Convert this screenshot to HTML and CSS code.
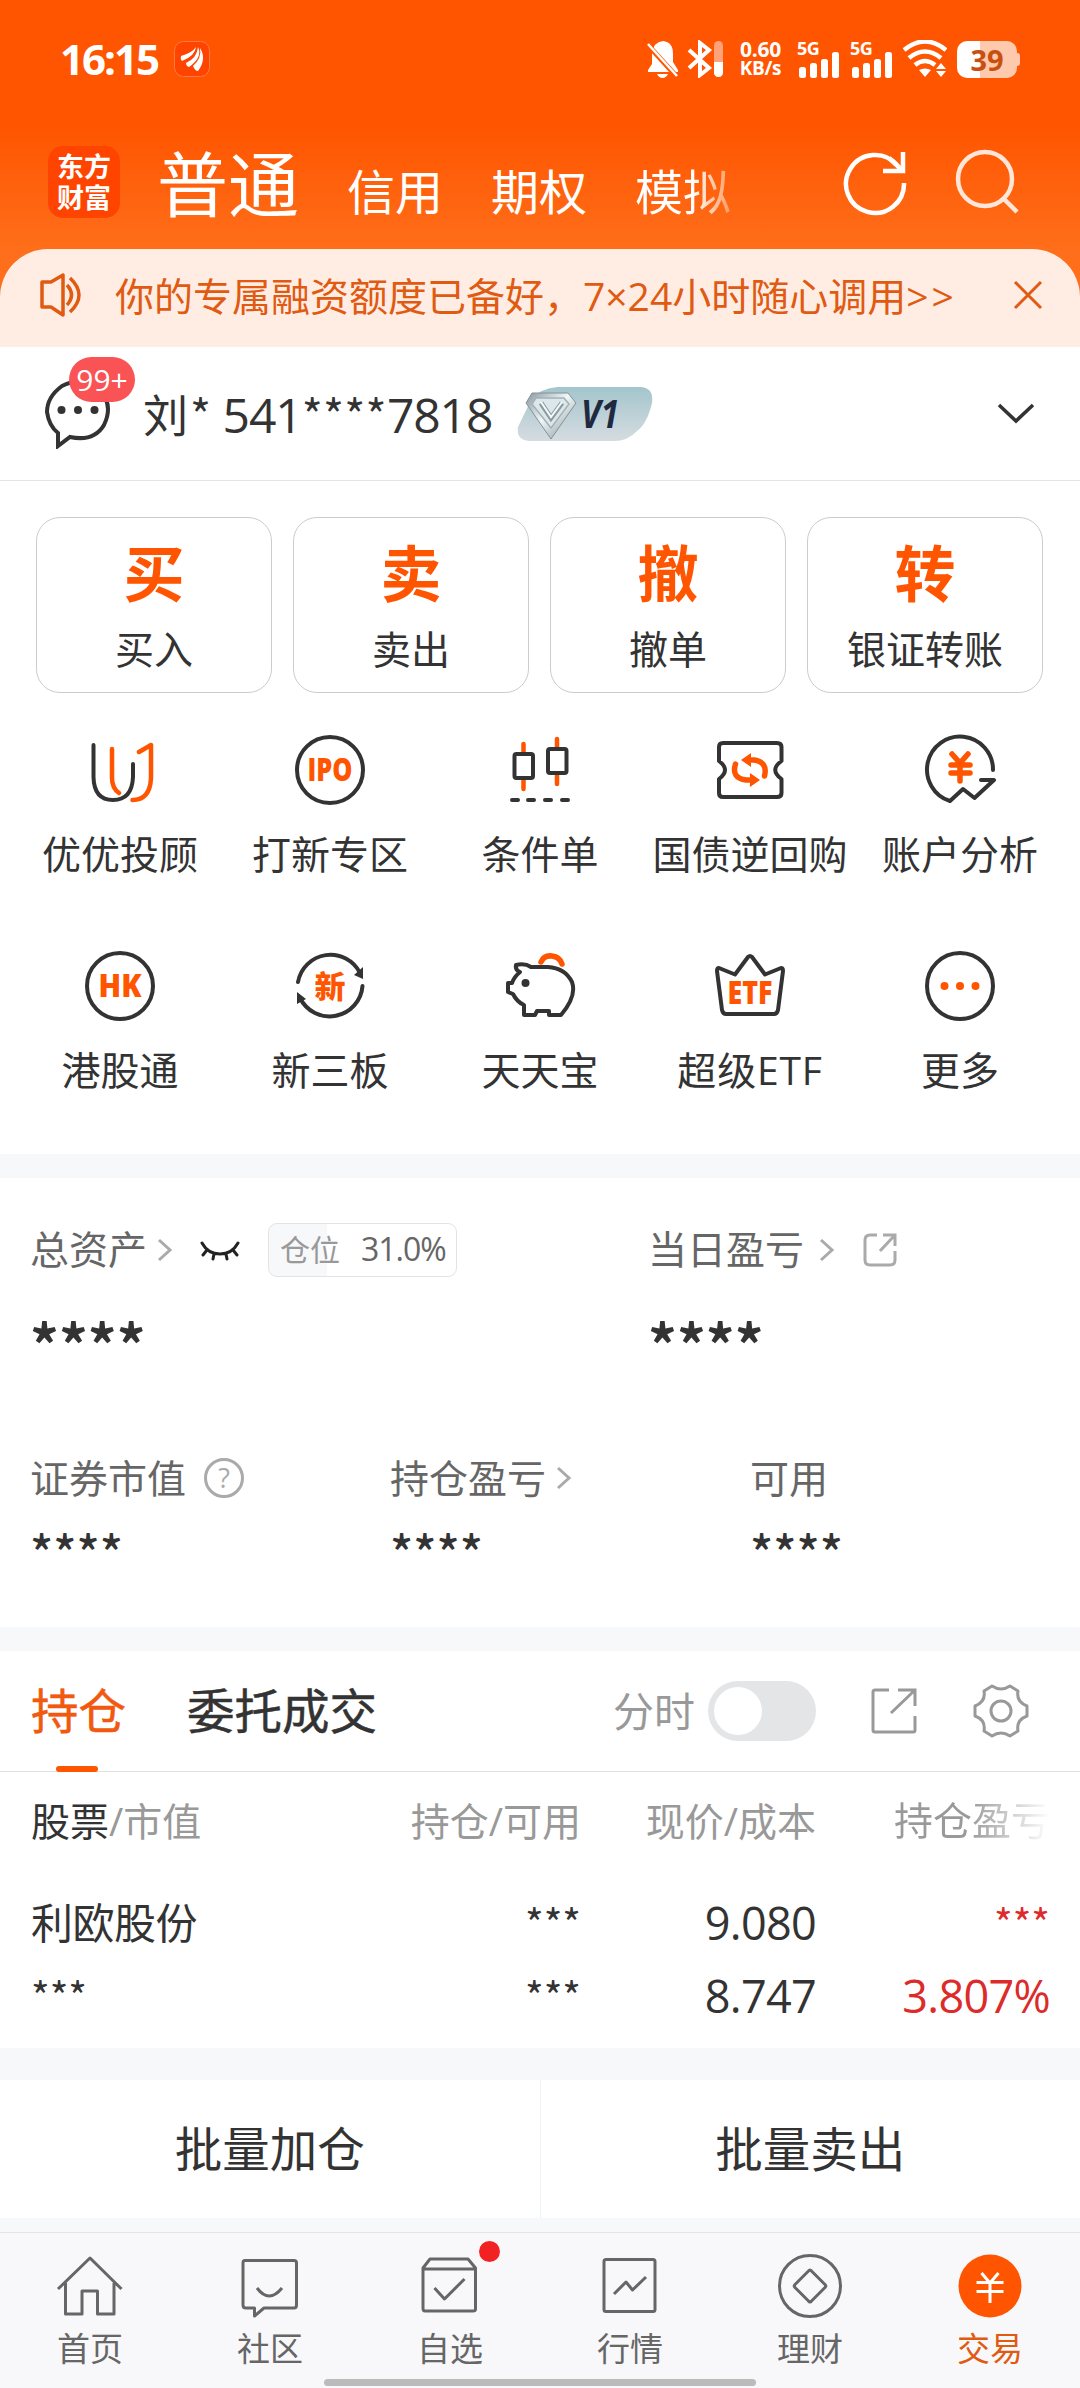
FILE: index.html
```html
<!DOCTYPE html>
<html lang="zh-CN">
<head>
<meta charset="utf-8">
<title>交易</title>
<link rel="stylesheet" href="styles.css">
</head>
<body>
<header class="top">
  <div class="status">
    <span class="clock">16:15</span>
    <svg class="mini-logo" width="36" height="36" viewBox="0 0 36 36"><rect x=".5" y=".5" width="35" height="35" rx="9" fill="#ff4400" stroke="#ff7a45"/><path fill="#fff" d="M7 15Q18 12 22 6Q21 15 8 20Q6 18 7 15ZM12 22Q23 17 24 6Q29 16 15 26Q12 25 12 22ZM19 25Q28 17 26 7Q33 18 24 30Q21 30 19 25Z"/></svg>
    <div class="status-right">
      <svg width="32" height="38" viewBox="0 0 32 38"><path fill="#fff" d="M16 1Q26 2 26 14V22L31 30V32H1V30L5 24V14Q6 2 16 1ZM10 34H21Q19 38 15.500 38Q12 38 10 34Z"/><path d="M0 4L30 37" stroke="#ff5500" stroke-width="5"/><path d="M1 4L30 36" stroke="#fff" stroke-width="2.500"/></svg>
      <svg class="bt" width="36" height="38" viewBox="0 0 36 38"><path d="M2 10L22 28L13 35V3L22 10L2 28" fill="none" stroke="#fff" stroke-width="4"/><rect x="27" y="1" width="9" height="36" rx="4.500" fill="#ffa27a"/><path fill="#fff" d="M27 22H36V32.500A4.500 4.500 0 0 1 27 32.500Z"/></svg>
      <div class="speed"><span>0.60</span><span>KB/s</span></div>
      <div class="signal"><span>5G</span><svg width="40" height="26" viewBox="0 0 40 26" fill="#fff"><rect y="15" width="7" height="11" rx="2.500"/><rect x="11" y="11" width="7" height="15" rx="2.500"/><rect x="22" y="7" width="7" height="19" rx="2.500"/><rect x="33" y="0" width="7" height="26" rx="2.500"/></svg></div>
      <div class="signal"><span>5G</span><svg width="40" height="26" viewBox="0 0 40 26" fill="#fff"><rect y="15" width="7" height="11" rx="2.500"/><rect x="11" y="11" width="7" height="15" rx="2.500"/><rect x="22" y="7" width="7" height="19" rx="2.500"/><rect x="33" y="0" width="7" height="26" rx="2.500"/></svg></div>
      <svg class="wifi" width="44" height="38" viewBox="0 0 44 38"><path d="M1 10Q22 -7 43 10M6 18Q22 5 38 18M12 25Q22 17 32 25" fill="none" stroke="#fff" stroke-width="4.500"/><path fill="#fff" d="M16 30Q22 27 28 30L22 37ZM33 29L38 23L43 29ZM33 31H43L38 37Z"/></svg>
      <div class="battery">39</div>
    </div>
  </div>
  <nav class="accounts">
    <div class="brand"><span>东方</span><span>财富</span></div>
    <div class="account-tabs"><b>普通</b><span>信用</span><span>期权</span><span class="fading">模拟</span></div>
    <svg class="refresh" width="66" height="68" viewBox="0 0 66 68" fill="none" stroke="#fff" stroke-width="4.500"><path d="M61 35A29 29 0 1 1 54 17"/><path d="M60 4V23H40M46 10L59 22" /></svg>
    <svg width="64" height="68" viewBox="0 0 64 68" fill="none" stroke="#ffe6d8" stroke-width="4.500"><circle cx="30" cy="31" r="27"/><path d="M49 51L62 64"/></svg>
  </nav>
</header>

<section class="notice">
  <svg width="42" height="44" viewBox="0 0 42 44" fill="none" stroke="#e05a12" stroke-width="3.500"><path d="M2 9H11L23 2V42L11 34H2Z" stroke-linejoin="round"/><path d="M27 12Q36 22 27 32M30 5Q48 22 30 39"/></svg>
  <p>你的专属融资额度已备好，7×24小时随心调用<span class="more">&gt;&gt;</span></p>
  <svg width="30" height="30" viewBox="0 0 30 30" stroke="#e05a12" stroke-width="3"><path d="M2 2L28 28M28 2L2 28"/></svg>
</section>

<section class="user">
  <div class="message">
    <svg width="68" height="70" viewBox="0 0 68 70" fill="none" stroke="#333" stroke-width="4"><path d="M14 54V67L26 58Q50 63 60 46Q70 25 55 11Q38 -3 18 7Q3 18 3 33Q5 47 14 54Z"/><g fill="#333" stroke="none"><circle cx="17.500" cy="31" r="4"/><circle cx="34" cy="31" r="4"/><circle cx="50.500" cy="31" r="4"/></g></svg>
    <span class="badge">99+</span>
  </div>
  <span class="uid"><em>刘</em><i>*</i> 541<i>****</i>7818</span>
  <svg class="level" width="138" height="56" viewBox="0 0 138 56">
    <defs><linearGradient id="plate" x2="0" y2="1"><stop stop-color="#a3c5cc"/><stop offset="1" stop-color="#d5dce1"/></linearGradient><linearGradient id="gem" x2="1" y2="1"><stop stop-color="#86959c"/><stop offset=".45" stop-color="#f2f7f8"/><stop offset="1" stop-color="#7c8d94"/></linearGradient></defs>
    <path fill="url(#plate)" d="M42 1H125Q138 2 136 17Q131 38 121 45Q112 55 98 55H13Q0 54 2 41L15 14Q24 2 42 1Z"/>
    <path fill="url(#gem)" stroke="#82939a" d="M16 7H52L60 17L35 53L10 17Z"/>
    <path fill="#dbe7ea" stroke="#a3b2b8" stroke-width="1.500" d="M20 12H48L53 18L35 42L16 18Z"/>
    <path fill="none" stroke="#8b9ba1" stroke-width="5" d="M25 17L35 32L46 17"/><path fill="none" stroke="#f6fafb" stroke-width="2" d="M25 16L35 31L46 16"/>
    <text x="65" y="42" class="level-text" textLength="38" lengthAdjust="spacingAndGlyphs">V1</text>
  </svg>
  <svg class="down" width="38" height="22" viewBox="0 0 38 22" fill="none" stroke="#333" stroke-width="3.500"><path d="M2 2L19 18L36 2"/></svg>
</section>

<section class="actions">
  <a><b>买</b><span>买入</span></a>
  <a><b>卖</b><span>卖出</span></a>
  <a><b>撤</b><span>撤单</span></a>
  <a><b>转</b><span>银证转账</span></a>
</section>

<section class="services">
  <a><svg viewBox="0 0 84 84"><path class="d" d="M15.500 17V49Q16 72 35 72Q54 72 55 49V36"/><path class="o" d="M34 21V50Q34 60 41 65M61 24L73 17V50Q72 72 54.500 72"/></svg><span>优优投顾</span></a>
  <a><svg viewBox="0 0 84 84"><circle class="d" cx="42" cy="42" r="33"/><text x="42" y="53" textLength="45" lengthAdjust="spacingAndGlyphs">IPO</text></svg><span>打新专区</span></a>
  <a><svg viewBox="0 0 84 84"><path class="o" d="M25.500 16V24M25.500 52V61M59 11V20M59 46V56"/><rect class="d" x="16.500" y="26" width="18.500" height="24" rx="2"/><rect class="d" x="50" y="21" width="18.500" height="24" rx="2"/><path class="d" d="M14 72H20M30 72H36M47 72H53M64 72H70"/></svg><span>条件单</span></a>
  <a><svg viewBox="0 0 84 84"><path class="d" d="M15 15H69Q73.500 15 73.500 19V33Q61 42 73.500 51V65Q73.500 69 69 69H15Q11 69 11 65V51Q23 42 11 33V19Q11 15 15 15Z"/><path class="o thick" d="M42 32H46Q60 34 56.500 48M27.500 36Q23 50 38 52H42"/><path class="of" d="M33 32L43 25V39ZM52 52L42 45V59Z"/></svg><span>国债逆回购</span></a>
  <a><svg viewBox="0 0 84 84"><path class="d" d="M75 42A33 33 0 1 0 32 73L45 61L56.500 70L76 52H63"/><path class="o thick" d="M34 26L42 35L50 26M42 35V53M33 37H52M33 45H52"/></svg><span>账户分析</span></a>
  <a><svg viewBox="0 0 84 84"><circle class="d" cx="42" cy="42" r="33"/><text x="42" y="53" textLength="43" lengthAdjust="spacingAndGlyphs">HK</text></svg><span>港股通</span></a>
  <a><svg viewBox="0 0 84 84"><path class="d" d="M10 38A33 33 0 0 1 72 29M74.500 42A33 33 0 0 1 12 54"/><path fill="#333" d="M75 23L75 35L66 31ZM9 48L9 60L18 55Z"/><text x="42" y="54" class="zh">新</text></svg><span>新三板</span></a>
  <a><svg viewBox="0 0 84 84"><path class="d" d="M18 21Q27 19 33 23H50Q67 24 74 38Q79 52 63 71H51V67H39L37 71H26V61Q19 58 15 50L10 48V39H14Q16 33 22 28Q17 26 18 21Z"/><circle cx="27.500" cy="39" r="4" fill="#333"/><path class="o thick" d="M43 18Q46 11 54 12Q62 13 64 20"/></svg><span>天天宝</span></a>
  <a><svg viewBox="0 0 84 84"><path class="d" d="M11 24L27 30.500L40 13Q42 11 44 13L57 30.500L73 24Q75 24 75 27L70 66Q69 70 66 70H18Q15 70 14 66L9 27Q9 24 11 24Z"/><text x="42" y="60" textLength="45" lengthAdjust="spacingAndGlyphs">ETF</text></svg><span class="etf">超级ETF</span></a>
  <a><svg viewBox="0 0 84 84"><circle class="d" cx="42" cy="42" r="33"/><g class="of"><circle cx="26.500" cy="42" r="4"/><circle cx="42" cy="42" r="4"/><circle cx="57.500" cy="42" r="4"/></g></svg><span>更多</span></a>
</section>

<section class="assets">
  <div class="asset-main">
    <div>
      <div class="label"><span>总资产</span><svg class="chev" viewBox="0 0 16 24"><path d="M2 2L13 12L2 22"/></svg><svg class="eye" width="40" height="22" viewBox="0 0 40 22" fill="none" stroke="#222" stroke-width="3" stroke-linecap="round"><path d="M2 4Q8 15 20 15Q32 15 38 4M7 11L3 16M14 15L13 20M26 15L27 20M33 11L37 16"/></svg><span class="ratio"><em>仓位</em>31.0%</span></div>
      <div class="total">****</div>
    </div>
    <div>
      <div class="label"><span>当日盈亏</span><svg class="chev wide" viewBox="0 0 16 24"><path d="M2 2L13 12L2 22"/></svg><svg class="share" width="34" height="34" viewBox="0 0 34 34" fill="none" stroke="#aaa" stroke-width="3"><path d="M14 2H7Q2 2 2 7V27Q2 32 7 32H27Q32 32 32 27V18M20 2H32V13M32 2L17 18"/></svg></div>
      <div class="total">****</div>
    </div>
  </div>
  <div class="asset-sub">
    <div><div class="sub-label"><span>证券市值</span><i class="help">?</i></div><div class="amount">****</div></div>
    <div><div class="sub-label"><span>持仓盈亏</span><svg class="chev" viewBox="0 0 16 24"><path d="M2 2L13 12L2 22"/></svg></div><div class="amount">****</div></div>
    <div><div class="sub-label"><span>可用</span></div><div class="amount">****</div></div>
  </div>
</section>

<section class="holdings">
  <div class="hold-tabs">
    <span class="active">持仓</span><span class="orders">委托成交</span>
    <span class="minute">分时</span><span class="toggle"></span>
    <svg class="export" width="46" height="46" viewBox="0 0 46 46" fill="none" stroke="#999" stroke-width="3"><path d="M18 2H4Q2 2 2 4V42Q2 44 4 44H42Q44 44 44 42V28M27 2H44V18M44 2L20 25"/></svg>
    <svg class="gear" width="56" height="56" viewBox="0 0 56 56" fill="none" stroke="#999" stroke-width="3" stroke-linejoin="round"><circle cx="28" cy="28" r="10"/><path d="M19 3Q28 9 37 3L45 8Q43 19 54 23V33Q43 37 45 48L37 53Q28 47 19 53L11 48Q13 37 2 33V23Q13 19 11 8Z"/></svg>
  </div>
  <div class="row head"><span><b>股票</b>/市值</span><span>持仓/可用</span><span>现价/成本</span><span class="fade">持仓盈亏</span></div>
  <div class="row first"><span class="name">利欧股份</span><span class="star">***</span><span>9.080</span><span class="star up">***</span></div>
  <div class="row"><span class="star">***</span><span class="star">***</span><span>8.747</span><span class="up">3.807%</span></div>
</section>

<section class="batch"><a>批量加仓</a><a>批量卖出</a></section>

<nav class="tabbar">
  <a><svg viewBox="0 0 72 72"><path d="M4 39L36 8L67.500 39M11.500 33V64H28V41H43.500V64H60V33"/></svg><span>首页</span></a>
  <a><svg viewBox="0 0 72 72"><path d="M11 10.500H60Q62.500 10.500 62.500 13V55Q62.500 58 60 58H30L20.500 66V58H12Q9 58 9 55V13Q9 10.500 11 10.500ZM23 38Q35 54 48 38"/></svg><span>社区</span></a>
  <a><svg viewBox="0 0 72 72"><path d="M9 18L16 9H54L61.500 18V59Q61.500 61 59 61H11Q9 61 9 58ZM9 19H61M20.500 38L30.500 49L50.500 29"/></svg><i class="dot"></i><span>自选</span></a>
  <a><svg viewBox="0 0 72 72"><rect x="10" y="9.500" width="51" height="52" rx="2"/><path d="M20 44L32 32L38.500 40L52 27"/></svg><span>行情</span></a>
  <a><svg viewBox="0 0 72 72"><circle cx="36" cy="36" r="30.500"/><path d="M34.500 21Q36 19 37.500 21L51 34.500Q52.500 36 51 37.500L37.500 51Q36 53 34.500 51L21 37.500Q19.500 36 21 34.500Z"/></svg><span>理财</span></a>
  <a class="on"><svg viewBox="0 0 72 72"><circle cx="36" cy="36" r="31.500"/><path d="M27.500 23L36 33L44.500 23M36 33V53M22.500 32.500H49.500M22.500 41.500H49.500"/></svg><span>交易</span></a>
  <i class="home-bar"></i>
</nav>
</body>
</html>
```
FILE: styles.css
```css
* { box-sizing: border-box; }
body {
  margin: 0;
  width: 1080px;
  height: 2388px;
  overflow: hidden;
  background: #fff;
  color: #333;
  font-family: "Open Sans", "Noto Sans CJK SC", sans-serif;
  font-size: 39px;
  line-height: 1;
}
i, em { font-style: normal; }
svg { display: block; flex: none; }
span, b, a { white-space: nowrap; }

/* header */
.top {
  height: 300px;
  margin-bottom: -51px;
  color: #fff;
  background: linear-gradient(#ff5500 0, #ff5500 125px, #ff6e1a 249px, #ff6e1a 300px);
}
.status { height: 118px; display: flex; align-items: center; padding: 0 63px 0 60px; }
.clock { font-size: 42px; font-weight: 700; width: 98px; letter-spacing: -2px; }
.mini-logo { margin: 0 0 0 16px; }
.status-right { margin-left: auto; display: flex; align-items: center; height: 38px; }
.bt { margin-left: 8px; }
.speed { width: 47px; margin-left: 14px; text-align: center; font-weight: 700; font-size: 21px; letter-spacing: -.3px; }
.speed span { display: block; line-height: 19px; }
.speed span:last-child { font-size: 19px; }
.signal { width: 42px; margin-left: 13px; height: 38px; }
.signal + .signal { margin-left: 11px; }
.signal span { display: block; height: 12px; font: 700 18px/16px "Open Sans", sans-serif; letter-spacing: -.5px; }
.signal svg { margin-left: 2px; }
.wifi { margin-left: 11px; }
.battery {
  width: 60px; height: 37px; margin-left: 10px; border-radius: 10px; text-align: center;
  background: linear-gradient(90deg, #fff 23px, #ffc9ae 23px);
  color: #c8500f; font-weight: 700; font-size: 29px; line-height: 37px; position: relative;
}
.battery::after { content: ""; position: absolute; right: -3px; top: 12px; width: 3px; height: 13px; background: #ffc9ae; border-radius: 0 3px 3px 0; }
.accounts { display: flex; align-items: center; height: 128px; padding-left: 48px; }
.brand { width: 72px; height: 72px; border-radius: 15px; background: #ff4400; display: flex; flex-direction: column; align-items: center; justify-content: center; gap: 3px; font-weight: 700; font-size: 27px; }
.brand span { line-height: 28px; }
.account-tabs { display: flex; align-items: flex-end; gap: 48px; margin-left: 37px; width: 686px; height: 72px; }
.account-tabs b { font-size: 71px; line-height: 68px; font-weight: 400; }
.account-tabs span { font-size: 48px; line-height: 52px; }
.fading { background: linear-gradient(90deg, #fff 60%, #ff9a60); -webkit-background-clip: text; background-clip: text; color: transparent; }
.refresh { margin-right: 46px; }

/* notice */
.notice { height: 98px; padding: 0 37px 6px 40px; display: flex; align-items: center; background: #ffede4; border-radius: 48px 48px 0 0; color: #e05a12; position: relative; }
.notice p { margin: 0 auto 0 33px; }
.more { letter-spacing: 3px; }

/* user */
.user { height: 134px; display: flex; align-items: center; padding: 0 45px 0 44px; border-bottom: 1px solid #e5e5e5; }
.message { position: relative; width: 99px; }
.badge { position: absolute; left: 25px; top: -22px; width: 66px; height: 45px; border-radius: 23px; background: #f95355; color: #fff; text-align: center; font-size: 30px; line-height: 45px; }
.uid { font-size: 48px; letter-spacing: -1.1px; width: 373px; padding-top: 2px; }
.uid em { font-size: 45px; margin-right: 3px; }
.uid i { font-family: "Noto Sans CJK SC", sans-serif; font-size: 45px; letter-spacing: .3px; }
.level-text { font: italic 700 40px "Open Sans", sans-serif; fill: #202940; }
.down { margin-left: auto; }

/* main actions */
.actions { display: flex; gap: 21px; padding: 36px 37px 0 36px; }
.actions a { flex: 1; height: 176px; border: 1px solid #ccc; border-radius: 24px; display: flex; flex-direction: column; align-items: center; padding-top: 24px; }
.actions b { color: #ff5500; font-size: 61px; line-height: 64px; }
.actions span { margin-top: 23px; }

/* service grid */
.services { height: 461px; padding: 35px 15px 0; display: grid; grid-template-columns: repeat(5, 210px); grid-auto-rows: 216px; }
.services a { display: flex; flex-direction: column; align-items: center; gap: 22px; }
.services a svg { width: 84px; height: 84px; }
.etf { letter-spacing: .8px; }
.d { fill: none; stroke: #333; stroke-width: 4; stroke-linejoin: round; stroke-linecap: round; }
.o { fill: none; stroke: #ff5500; stroke-width: 4.5; stroke-linejoin: round; stroke-linecap: round; }
.thick { stroke-width: 5.5; }
.of { fill: #ff5500; }
.services text { font: 800 31px "Open Sans", sans-serif; fill: #ff5500; text-anchor: middle; }
.services .zh { font: 900 31px "Noto Sans CJK SC", sans-serif; }

/* assets */
.assets { height: 497px; border: solid #f7f8fa; border-width: 24px 0; padding: 45px 0 0 30px; color: #666; }
.asset-main { display: grid; grid-template-columns: 618px 1fr; }
.label { height: 53px; display: flex; align-items: center; }
.label > span:first-child, .sub-label > span { padding-bottom: 2px; }
.chev { width: 16px; height: 24px; margin-left: 10px; fill: none; stroke: #aaa; stroke-width: 3; }
.wide { margin-left: 15px; }
.eye { margin-left: 27px; }
.ratio { margin-left: 28px; width: 189px; height: 54px; border: 1px solid #e3e3e3; border-radius: 9px; background: linear-gradient(90deg, #f7f8fa 58px, #fff 58px); font-size: 32px; line-height: 50px; padding-left: 11px; letter-spacing: -1px; }
.ratio em { color: #999; font-size: 30px; letter-spacing: 0; margin-right: 21px; }
.share { margin-left: 28px; }
.total, .amount, .star { font-family: "Noto Sans CJK SC", sans-serif; }
.total { margin-top: 36px; height: 60px; line-height: 60px; font-size: 57px; font-weight: 700; color: #333; }
.asset-sub { display: grid; grid-template-columns: repeat(3, 360px); margin-top: 86px; }
.sub-label { height: 40px; display: flex; align-items: center; }
.help { margin-left: 18px; width: 40px; height: 40px; border: 3px solid #aaa; border-radius: 50%; color: #aaa; font-size: 27px; line-height: 34px; text-align: center; }
.amount { margin-top: 32px; height: 40px; line-height: 40px; font-size: 48px; font-weight: 500; color: #333; }

/* holdings */
.hold-tabs { height: 121px; display: flex; align-items: center; padding-left: 31px; border-bottom: 1px solid #e0e0e0; font-size: 47.500px; -webkit-text-stroke: .5px currentColor; }
.active { color: #f0590f; position: relative; line-height: 122px; }
.active::after { content: ""; position: absolute; left: 25px; bottom: 0; width: 42px; height: 6px; border-radius: 3px; background: #ff5500; }
.orders { margin-left: 61px; line-height: 122px; }
.minute { margin-left: auto; font-size: 41px; color: #999; -webkit-text-stroke: 0; }
.toggle { margin: 0 55px 0 13px; width: 108px; height: 60px; border-radius: 30px; background: #e4e5e7; padding: 6px; }
.toggle::before { content: ""; display: block; width: 48px; height: 48px; border-radius: 50%; background: #fff; }
.gear { margin: 0 51px 0 56px; }
.row { display: grid; grid-template-columns: 301px 249px 235px 234px; margin-left: 31px; height: 73px; align-items: center; text-align: right; font-size: 45px; letter-spacing: -.7px; }
.row > :first-child { text-align: left; }
.head { height: 97px; font-size: 39px; color: #999; letter-spacing: 0; }
.head b { font-weight: 400; color: #333; }
.fade { background: linear-gradient(90deg, #999 65%, #fff); -webkit-background-clip: text; background-clip: text; color: transparent; line-height: 1.3; }
.first { margin-top: 17px; }
.name { font-size: 42px; letter-spacing: -.5px; }
.star { font-size: 40px; letter-spacing: 0; padding-bottom: 2px; }
.up { color: #dd2a2a; }

/* batch actions */
.batch { margin-top: 16px; height: 184px; border: solid #f7f8fa; border-width: 32px 0 14px; display: flex; }
.batch a { flex: 1; text-align: center; font-size: 47.500px; line-height: 138px; }
.batch a:first-child { border-right: 1px solid #f1f2f4; }

/* bottom bar */
.tabbar { position: relative; height: 157px; background: #f8f8fa; border-top: 1px solid #e3e4e6; display: grid; grid-template-columns: repeat(6, 1fr); color: #666; font-size: 33px; }
.tabbar a { position: relative; display: flex; flex-direction: column; align-items: center; padding-top: 17px; gap: 10px; }
.tabbar a svg { width: 72px; height: 72px; fill: none; stroke: #666; stroke-width: 3; stroke-linejoin: round; }
.dot { position: absolute; left: 119px; top: 8px; width: 21px; height: 21px; border-radius: 50%; background: #f22222; }
.tabbar .on { color: #e05a12; }
.tabbar .on svg { stroke: #fff; }
.on circle { fill: #ff5500; stroke: none; }
.home-bar { position: absolute; left: 324px; bottom: 3px; width: 432px; height: 7px; border-radius: 4px; background: #bbb; }
```
